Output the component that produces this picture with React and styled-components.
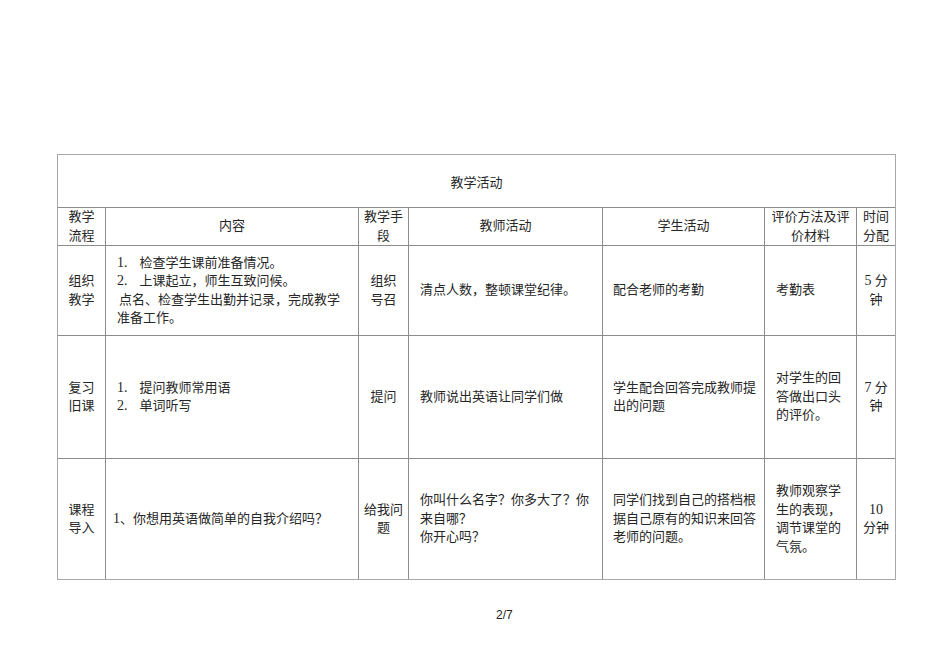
import React from "react";
import styled, { createGlobalStyle } from "styled-components";

const GlobalStyle = createGlobalStyle`
  html, body {
    margin: 0;
    padding: 0;
    background: #ffffff;
  }
`;

const Page = styled.div`
  width: 950px;
  height: 672px;
  padding: 154px 0 0 57px;
  box-sizing: border-box;
  font-family: "Liberation Serif", "Noto Sans CJK SC", serif;
  color: #262626;
`;

const Table = styled.table`
  width: 839px;
  table-layout: fixed;
  border-collapse: separate;
  border-spacing: 0;
  border: 1px solid #a8a8a8;
  font-size: 13px;
  line-height: 18.6px;
`;

const Col = styled.col`
  width: ${(p) => p.$w}px;
`;

const Row = styled.tr`
  height: ${(p) => p.$h}px;

  &:last-child td {
    border-bottom: none;
  }
`;

const Cell = styled.td`
  box-sizing: border-box;
  border-right: 1px solid #8c8c8c;
  border-bottom: 1px solid #8c8c8c;
  padding: ${(p) => p.$pt || 0}px ${(p) => p.$px ?? 0}px 0;
  text-align: ${(p) => p.$align || "center"};
  vertical-align: middle;
  white-space: nowrap;

  &:last-child {
    border-right: none;
  }
`;

const Num = styled.span`
  font-size: 14px;
`;

const Indent = styled.span`
  padding-left: ${(p) => p.$w}px;
`;

const Footer = styled.div`
  width: 839px;
  padding: 28px 0 0 439px;
  box-sizing: border-box;
  font-family: "Liberation Sans", Arial, sans-serif;
  font-size: 12px;
  color: #222;
`;

const widths = [48, 253, 50, 194, 162, 92, 38];

export default function App() {
  return (
    <Page>
      <GlobalStyle />
      <Table>
        <colgroup>
          {widths.map((w, i) => (
            <Col key={i} $w={w} />
          ))}
        </colgroup>
        <tbody>
          <Row $h={53}>
            <Cell colSpan={7} $pt={4}>
              教学活动
            </Cell>
          </Row>
          <Row $h={38}>
            <Cell>
              教学
              <br />
              流程
            </Cell>
            <Cell>内容</Cell>
            <Cell>
              教学手
              <br />段
            </Cell>
            <Cell>教师活动</Cell>
            <Cell>学生活动</Cell>
            <Cell>
              评价方法及评
              <br />
              价材料
            </Cell>
            <Cell>
              时间
              <br />
              分配
            </Cell>
          </Row>
          <Row $h={90}>
            <Cell>
              组织
              <br />
              教学
            </Cell>
            <Cell $align="left" $px={11}>
              <Num>1.</Num>
              <Indent $w={12}>检查学生课前准备情况。</Indent>
              <br />
              <Num>2.</Num>
              <Indent $w={12}>上课起立，师生互致问候。</Indent>
              <br />
              <Indent $w={2}>点名、检查学生出勤并记录，完成教学</Indent>
              <br />
              准备工作。
            </Cell>
            <Cell>
              组织
              <br />
              号召
            </Cell>
            <Cell $align="left" $px={11}>
              清点人数，整顿课堂纪律。
            </Cell>
            <Cell $align="left" $px={10}>
              配合老师的考勤
            </Cell>
            <Cell $align="left" $px={11}>
              考勤表
            </Cell>
            <Cell>
              <Num>5</Num> 分<br />钟
            </Cell>
          </Row>
          <Row $h={123}>
            <Cell>
              复习
              <br />
              旧课
            </Cell>
            <Cell $align="left" $px={11}>
              <Num>1.</Num>
              <Indent $w={12}>提问教师常用语</Indent>
              <br />
              <Num>2.</Num>
              <Indent $w={12}>单词听写</Indent>
            </Cell>
            <Cell>提问</Cell>
            <Cell $align="left" $px={11}>
              教师说出英语让同学们做
            </Cell>
            <Cell $align="left" $px={10}>
              学生配合回答完成教师提
              <br />
              出的问题
            </Cell>
            <Cell $align="left" $px={11}>
              对学生的回
              <br />
              答做出口头
              <br />
              的评价。
            </Cell>
            <Cell>
              <Num>7</Num> 分<br />钟
            </Cell>
          </Row>
          <Row $h={120}>
            <Cell>
              课程
              <br />
              导入
            </Cell>
            <Cell $align="left" $px={7}>
              <Num>1</Num>、你想用英语做简单的自我介绍吗？
            </Cell>
            <Cell>
              给我问
              <br />题
            </Cell>
            <Cell $align="left" $px={11}>
              你叫什么名字？你多大了？你
              <br />
              来自哪？
              <br />
              你开心吗？
            </Cell>
            <Cell $align="left" $px={10}>
              同学们找到自己的搭档根
              <br />
              据自己原有的知识来回答
              <br />
              老师的问题。
            </Cell>
            <Cell $align="left" $px={11}>
              教师观察学
              <br />
              生的表现，
              <br />
              调节课堂的
              <br />
              气氛。
            </Cell>
            <Cell>
              <Num>10</Num>
              <br />
              分钟
            </Cell>
          </Row>
        </tbody>
      </Table>
      <Footer>2/7</Footer>
    </Page>
  );
}
